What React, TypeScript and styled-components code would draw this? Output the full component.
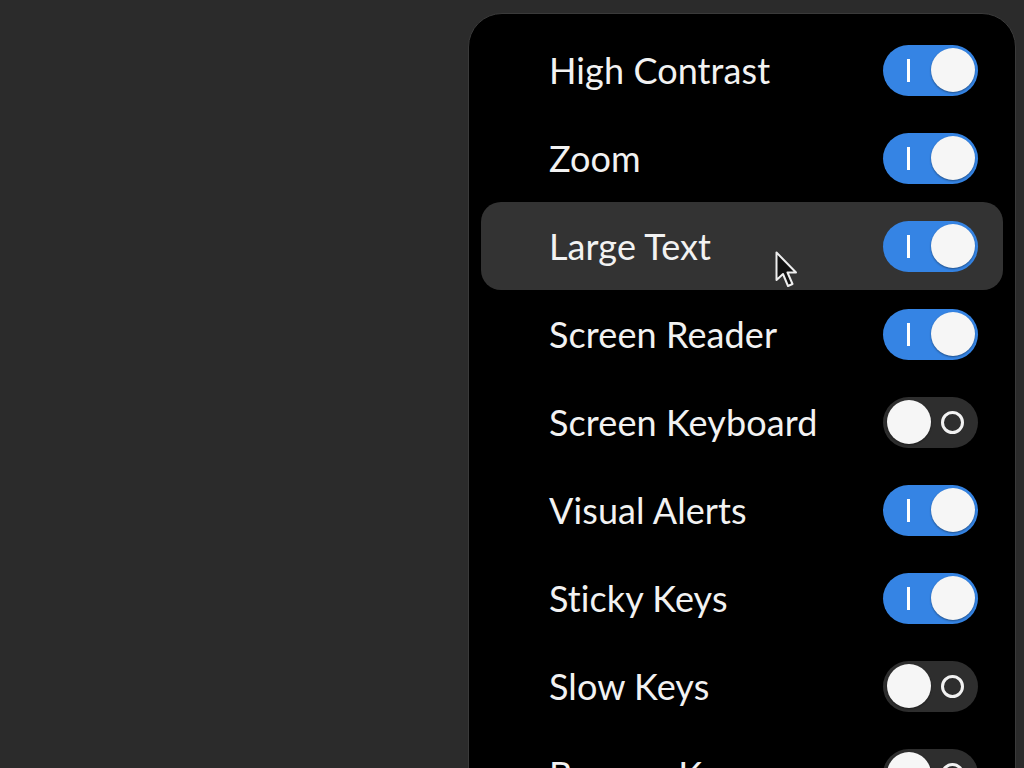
import React from "react";
import styled, { createGlobalStyle } from "styled-components";

const GlobalStyle = createGlobalStyle`
  html, body {
    margin: 0;
    padding: 0;
    background: #2b2b2b;
    overflow: hidden;
  }
  body {
    font-family: Lato, "Noto Sans", sans-serif;
  }
`;

const Screen = styled.div`
  width: 1024px;
  height: 768px;
  display: flex;
  justify-content: flex-end;
  align-items: flex-start;
  padding: 13px 8px 0 0;
  box-sizing: border-box;
  overflow: hidden;
`;

const Panel = styled.div`
  width: 548px;
  box-sizing: border-box;
  background: #000;
  border: 1px solid #3a3a3a;
  border-radius: 34px;
  padding: 12px 12px 40px;
  display: flex;
  flex-direction: column;
`;

const Row = styled.div<{ $hover?: boolean }>`
  position: relative;
  height: 88px;
  display: flex;
  align-items: center;
  justify-content: space-between;
  padding: 0 25px 0 68px;
  border-radius: 20px;
  background: ${(p) => (p.$hover ? "#333333" : "transparent")};
`;

const Label = styled.span`
  color: #f2f2f2;
  font-size: 36px;
  letter-spacing: 0.1px;
`;

const Track = styled.div<{ $on: boolean }>`
  width: 95px;
  height: 51px;
  box-sizing: border-box;
  padding: 0 3.5px;
  border-radius: 26px;
  background: ${(p) => (p.$on ? "#3584e4" : "#2e2e2e")};
  flex-shrink: 0;
  display: grid;
  grid-template-columns: 44px 44px;
  align-items: center;
  justify-items: center;
`;

const Knob = styled.div`
  width: 44px;
  height: 44px;
  border-radius: 50%;
  background: #f6f6f6;
  box-shadow: 0 1px 2px rgba(0, 0, 0, 0.4);
`;

const OnMark = styled.div`
  width: 3px;
  height: 23px;
  background: #ffffff;
`;

const OffMark = styled.div`
  width: 17px;
  height: 17px;
  border: 3px solid #f2f2f2;
  border-radius: 50%;
`;

const Cursor = styled.svg`
  position: absolute;
  left: 294px;
  top: 49px;
`;

type Item = { label: string; on: boolean; hover?: boolean };

const items: Item[] = [
  { label: "High Contrast", on: true },
  { label: "Zoom", on: true },
  { label: "Large Text", on: true, hover: true },
  { label: "Screen Reader", on: true },
  { label: "Screen Keyboard", on: false },
  { label: "Visual Alerts", on: true },
  { label: "Sticky Keys", on: true },
  { label: "Slow Keys", on: false },
  { label: "Bounce Keys", on: false },
];

const Switch: React.FC<{ on: boolean }> = ({ on }) => (
  <Track $on={on}>
    {on ? (
      <>
        <OnMark />
        <Knob />
      </>
    ) : (
      <>
        <Knob />
        <OffMark />
      </>
    )}
  </Track>
);

export default function App() {
  return (
    <>
      <GlobalStyle />
      <Screen>
        <Panel>
          {items.map((it) => (
            <Row key={it.label} $hover={it.hover}>
              <Label>{it.label}</Label>
              <Switch on={it.on} />
              {it.hover && (
                <Cursor width="26" height="40" viewBox="0 0 26 40">
                  <path
                    d="M1.5 1.5 L1.5 29 L8 23 L13 35 L17.5 33 L12.5 21.5 L21 21.5 Z"
                    fill="#111"
                    stroke="#eee"
                    strokeWidth="2"
                    strokeLinejoin="round"
                  />
                </Cursor>
              )}
            </Row>
          ))}
        </Panel>
      </Screen>
    </>
  );
}
